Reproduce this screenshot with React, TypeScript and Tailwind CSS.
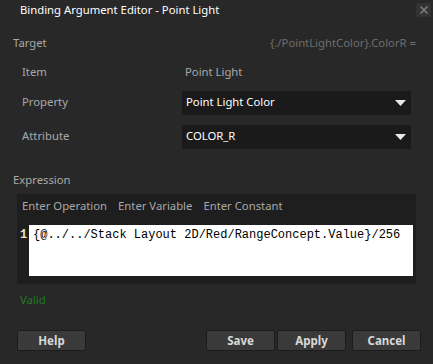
import { X } from 'lucide-react';

const font = { fontFamily: '"Noto Sans", "Open Sans", sans-serif' };

function Dropdown({ value }: { value: string }) {
  return (
    <div className="flex h-6 w-[229px] items-center justify-between bg-[#1a1a1a] pl-1 pr-[5px] text-[11.3px] text-white">
      <span>{value}</span>
      <svg width="11" height="6" viewBox="0 0 11 6">
        <path d="M0 0h11L5.5 6z" fill="#e8e8e8" />
      </svg>
    </div>
  );
}

function Button({ label }: { label: string }) {
  return (
    <button className="h-[21px] w-[69px] rounded-[2px] border border-[#1c1c1c] bg-[#3a3a3a] text-[11.5px] font-bold text-[#d8d8d8]">
      {label}
    </button>
  );
}

export default function App() {
  return (
    <div className="flex h-[364px] w-[433px] flex-col bg-[#282828] text-[11.3px]" style={font}>
      {/* title bar */}
      <div className="flex h-5 items-center justify-between pl-5 pr-[2px]">
        <span className="text-white">Binding Argument Editor - Point Light</span>
        <span className="grid h-[14px] w-[15px] place-items-center bg-[#333333]">
          <X className="h-3 w-3 text-[#7a7a7a]" strokeWidth={3.5} />
        </span>
      </div>

      <div className="mt-[15px] flex items-center justify-between pl-[13px] pr-[17px]">
        <span className="text-[#a8a8a8]">Target</span>
        <span className="text-[#6e6e6e]">{'{./PointLightColor}.ColorR ='}</span>
      </div>

      <div className="mt-[13px] flex flex-col gap-[10px] pl-[22px] text-[#a8a8a8]">
        <div className="flex h-4 items-center">
          <span className="w-[163px]">Item</span>
          <span>Point Light</span>
        </div>
        <div className="flex items-center">
          <span className="w-[160px]">Property</span>
          <Dropdown value="Point Light Color" />
        </div>
        <div className="flex items-center">
          <span className="w-[160px]">Attribute</span>
          <Dropdown value="COLOR_R" />
        </div>
      </div>

      <div className="mt-[23px] pl-[13px] text-[#a8a8a8]">Expression</div>

      <div className="mx-[17px] mt-[5px] flex h-[90px] flex-col bg-[#1e1e1e] pb-[8px] pl-[3px] pr-[3px]">
        <div className="flex h-[25px] items-center gap-[11px] pl-[2px] text-[#a8a8a8]">
          <span>Enter Operation</span>
          <span>Enter Variable</span>
          <span>Enter Constant</span>
        </div>
        <div className="mt-[6px] flex flex-1">
          <span className="w-[9px] text-[12px] font-bold leading-[21px] text-[#f0e6c8]" style={{ fontFamily: '"Liberation Mono", monospace' }}>
            1
          </span>
          <div
            className="flex-1 bg-white pl-1 text-[12px] leading-[21px] text-black"
            style={{ fontFamily: '"Liberation Mono", monospace' }}
          >
            {'{@../../Stack Layout 2D/Red/RangeConcept.Value}/256'}
          </div>
        </div>
      </div>

      <div className="mt-[8px] pl-5 text-[#1f7a1f]">Valid</div>

      <div className="mt-[21px] flex items-center pl-[17px] pr-3">
        <Button label="Help" />
        <div className="ml-auto flex gap-[2px]">
          <Button label="Save" />
          <Button label="Apply" />
        </div>
        <div className="ml-[6px]">
          <Button label="Cancel" />
        </div>
      </div>
    </div>
  );
}
